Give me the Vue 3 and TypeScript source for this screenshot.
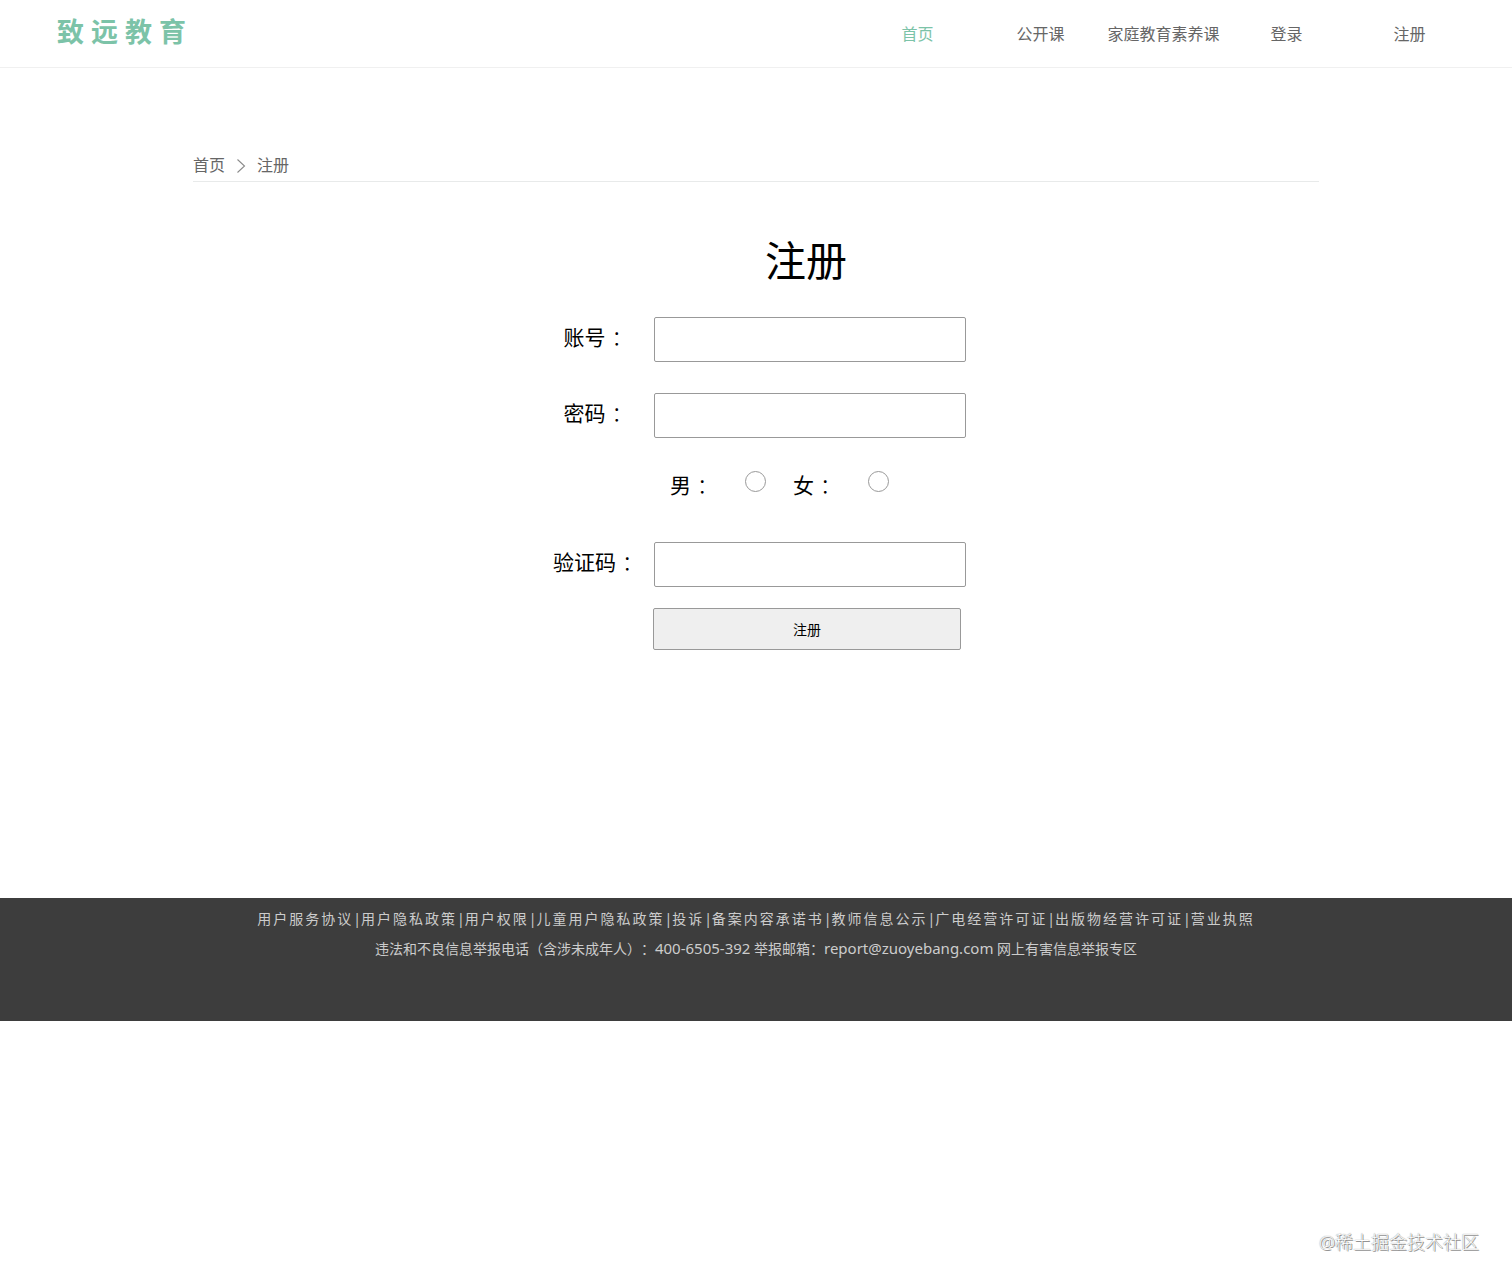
<script setup lang="ts">
import { reactive } from 'vue'

interface NavItem {
  label: string
  active?: boolean
}

const navItems: NavItem[] = [
  { label: '首页', active: true },
  { label: '公开课' },
  { label: '家庭教育素养课' },
  { label: '登录' },
  { label: '注册' },
]

const policies: string[] = [
  '用户服务协议',
  '用户隐私政策',
  '用户权限',
  '儿童用户隐私政策',
  '投诉',
  '备案内容承诺书',
  '教师信息公示',
  '广电经营许可证',
  '出版物经营许可证',
  '营业执照',
]

const form = reactive({ account: '', password: '', gender: '', code: '' })
</script>

<template>
  <div class="page">
    <header class="header">
      <a class="logo" href="#">致远教育</a>
      <nav class="nav">
        <a
          v-for="item in navItems"
          :key="item.label"
          href="#"
          class="nav-link"
          :class="{ active: item.active }"
          >{{ item.label }}</a
        >
      </nav>
    </header>

    <main class="main">
      <div class="crumbs">
        <a href="#">首页</a>
        <svg class="chevron" viewBox="0 0 10 16" aria-hidden="true">
          <path d="M1.5 1.5 8.5 8l-7 6.5" fill="none" stroke="#8a8a8a" stroke-width="1.1" />
        </svg>
        <a href="#">注册</a>
      </div>

      <form class="form" @submit.prevent>
        <h1 class="title">注册</h1>
        <div class="row">
          <label class="label" for="account">账号<span class="colon">：</span></label>
          <input id="account" v-model="form.account" class="field" type="text" />
        </div>
        <div class="row">
          <label class="label" for="password">密码<span class="colon">：</span></label>
          <input id="password" v-model="form.password" class="field" type="password" />
        </div>
        <div class="genders">
          <div class="option">
            <label for="male">男<span class="colon">：</span></label>
            <input id="male" v-model="form.gender" class="radio" type="radio" name="gender" value="male" />
          </div>
          <div class="option">
            <label for="female">女<span class="colon">：</span></label>
            <input id="female" v-model="form.gender" class="radio" type="radio" name="gender" value="female" />
          </div>
        </div>
        <div class="row code-row">
          <label class="label" for="code">验证码<span class="colon">：</span></label>
          <input id="code" v-model="form.code" class="field" type="text" />
        </div>
        <button class="submit" type="submit">注册</button>
      </form>
    </main>

    <footer class="footer">
      <div class="policies">
        <template v-for="(policy, i) in policies" :key="policy">
          <span v-if="i > 0" class="bar">|</span>
          <a href="#">{{ policy }}</a>
        </template>
      </div>
      <p class="report">
        违法和不良信息举报电话（含涉未成年人）：<span class="latin">400-6505-392</span> 举报邮箱：<span class="latin">report@zuoyebang.com</span> 网上有害信息举报专区
      </p>
    </footer>

    <div class="watermark">@稀土掘金技术社区</div>
  </div>
</template>

<style>
body {
  margin: 0;
  background: #fff;
}
</style>

<style scoped>
.page {
  position: relative;
  min-height: 100vh;
  font-family: 'Noto Sans', 'Noto Sans CJK SC', sans-serif;
  font-size: 16px;
  color: #000;
  text-spacing-trim: space-all;
}

.page a {
  color: inherit;
  text-decoration: none;
}

.header {
  display: flex;
  justify-content: space-between;
  height: 67px;
  padding: 0 41px 0 57px;
  border-bottom: 1px solid #f0f0f0;
}

.header .logo {
  font-size: 27px;
  font-weight: 700;
  line-height: 64px;
  letter-spacing: 7px;
  color: #7cc3a8;
}

.nav {
  display: flex;
}

.nav .nav-link {
  width: 123px;
  line-height: 68px;
  text-align: center;
  color: #666;
}

.nav .nav-link.active {
  color: #7cc3a8;
}

.main {
  max-width: 1126px;
  margin: 0 auto;
  padding: 82px 0 248px;
}

.crumbs {
  display: flex;
  align-items: center;
  gap: 11px;
  line-height: 31px;
  color: #666;
  border-bottom: 1px solid #e8eaea;
}

.chevron {
  width: 10px;
  height: 16px;
}

.form {
  width: 430px;
  margin: 0 auto;
  padding: 50px 10px 0 0;
}

.title {
  margin: 0 0 29px;
  padding-left: 110px;
  font-size: 41px;
  font-weight: 400;
  line-height: 56px;
  text-align: center;
}

.row {
  display: flex;
  margin-bottom: 31px;
}

.label {
  flex: 1;
  line-height: 40px;
  text-align: center;
}

.label,
.option label {
  font-size: 21px;
}

.colon {
  display: inline-block;
  width: 21px;
  font-weight: 300;
  text-indent: 6px;
}

.field {
  box-sizing: border-box;
  width: 312px;
  height: 45px;
  padding: 0 8px;
  font: inherit;
  background: #fff;
  border: 1px solid #999;
  border-radius: 2px;
}

.genders {
  display: flex;
  gap: 27px;
  height: 73px;
  padding-left: 134px;
}

.option {
  display: flex;
  justify-content: space-between;
  width: 96px;
}

.option label {
  line-height: 32px;
}

.radio {
  appearance: none;
  box-sizing: border-box;
  width: 21px;
  height: 21px;
  margin: 2px 0 0;
  background: #fff;
  border: 1px solid #999;
  border-radius: 50%;
}

.radio:checked {
  border: 6px solid #7cc3a8;
}

.code-row {
  margin-bottom: 21px;
}

.submit {
  display: block;
  box-sizing: border-box;
  width: 308px;
  height: 42px;
  margin-left: 117px;
  font-family: inherit;
  font-size: 14px;
  color: #000;
  background: #efefef;
  border: 1px solid #999;
  border-radius: 2px;
}

.footer {
  box-sizing: border-box;
  height: 123px;
  padding-top: 6px;
  font-size: 14px;
  line-height: 30px;
  color: #ccc;
  background: #3d3d3d;
}

.policies {
  display: flex;
  justify-content: center;
  letter-spacing: 2px;
}

.bar {
  letter-spacing: 0;
}

.report {
  margin: 0;
  text-align: center;
}

.latin {
  font-size: 15px;
  line-height: 20px;
}

.watermark {
  position: absolute;
  right: 33px;
  bottom: 31px;
  line-height: 24px;
  font-size: 18px;
  font-weight: 300;
  color: #fff;
  text-shadow: 0 0 1px #666, 1px 1px 0 #999;
}
</style>
